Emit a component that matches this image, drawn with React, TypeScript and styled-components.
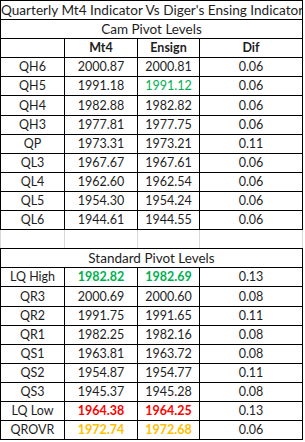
import styled, { createGlobalStyle } from "styled-components";

const GlobalStyle = createGlobalStyle`
  html, body {
    margin: 0;
    padding: 0;
    background: #ffffff;
  }
`;

type Tone = "plain" | "green" | "red" | "gold";

const toneColors: Record<Tone, string> = {
  plain: "#1e1e1e",
  green: "#00b050",
  red: "#ff0000",
  gold: "#ffc000",
};

const Sheet = styled.table`
  border-collapse: collapse;
  table-layout: fixed;
  width: 302px;
  font-family: Lato, "Liberation Sans", sans-serif;
  font-size: 12.5px;
  color: #1e1e1e;
`;

const Row = styled.tr`
  height: 19.1px;
`;

const Cell = styled.td<{ $tone?: Tone; $bold?: boolean }>`
  border: 1px solid #000;
  padding: 0 0 1px;
  text-align: center;
  vertical-align: bottom;
  line-height: 16px;
  white-space: nowrap;
  overflow: hidden;
  font-weight: ${({ $bold }) => ($bold ? 700 : 400)};
  color: ${({ $tone = "plain" }) => toneColors[$tone]};
`;

const BannerCell = styled(Cell)<{ $size: number }>`
  font-size: ${({ $size }) => $size}px;
`;

const GapCell = styled.td`
  border-top: 1px solid #000;
  border-bottom: 1px solid #000;
  border-left: 1px solid #d4d8df;
  border-right: 1px solid #d4d8df;
  padding: 0;
`;

type Level = {
  name: string;
  mt4: string;
  ensign: string;
  dif: string;
  tone?: Tone;
  bold?: boolean;
  ensignOnly?: boolean;
};

const camLevels: Level[] = [
  { name: "QH6", mt4: "2000.87", ensign: "2000.81", dif: "0.06" },
  { name: "QH5", mt4: "1991.18", ensign: "1991.12", dif: "0.06", tone: "green", ensignOnly: true },
  { name: "QH4", mt4: "1982.88", ensign: "1982.82", dif: "0.06" },
  { name: "QH3", mt4: "1977.81", ensign: "1977.75", dif: "0.06" },
  { name: "QP", mt4: "1973.31", ensign: "1973.21", dif: "0.11" },
  { name: "QL3", mt4: "1967.67", ensign: "1967.61", dif: "0.06" },
  { name: "QL4", mt4: "1962.60", ensign: "1962.54", dif: "0.06" },
  { name: "QL5", mt4: "1954.30", ensign: "1954.24", dif: "0.06" },
  { name: "QL6", mt4: "1944.61", ensign: "1944.55", dif: "0.06" },
];

const standardLevels: Level[] = [
  { name: "LQ High", mt4: "1982.82", ensign: "1982.69", dif: "0.13", tone: "green", bold: true },
  { name: "QR3", mt4: "2000.69", ensign: "2000.60", dif: "0.08" },
  { name: "QR2", mt4: "1991.75", ensign: "1991.65", dif: "0.11" },
  { name: "QR1", mt4: "1982.25", ensign: "1982.16", dif: "0.08" },
  { name: "QS1", mt4: "1963.81", ensign: "1963.72", dif: "0.08" },
  { name: "QS2", mt4: "1954.87", ensign: "1954.77", dif: "0.11" },
  { name: "QS3", mt4: "1945.37", ensign: "1945.28", dif: "0.08" },
  { name: "LQ Low", mt4: "1964.38", ensign: "1964.25", dif: "0.13", tone: "red", bold: true },
  { name: "QROVR", mt4: "1972.74", ensign: "1972.68", dif: "0.06", tone: "gold", bold: true },
];

const LevelRow = ({ level }: { level: Level }) => (
  <Row>
    <Cell>{level.name}</Cell>
    <Cell $tone={level.ensignOnly ? "plain" : level.tone} $bold={level.bold}>
      {level.mt4}
    </Cell>
    <Cell $tone={level.tone} $bold={level.bold}>
      {level.ensign}
    </Cell>
    <Cell>{level.dif}</Cell>
  </Row>
);

const App = () => (
  <>
    <GlobalStyle />
    <Sheet>
      <colgroup>
        <col style={{ width: 64 }} />
        <col style={{ width: 73 }} />
        <col style={{ width: 62 }} />
        <col style={{ width: 103 }} />
      </colgroup>
      <tbody>
        <Row>
          <BannerCell colSpan={4} $size={13.6}>
            Quarterly Mt4 Indicator Vs Diger's Ensing Indicator
          </BannerCell>
        </Row>
        <Row>
          <BannerCell colSpan={4} $size={13.5}>
            Cam Pivot Levels
          </BannerCell>
        </Row>
        <Row>
          <Cell />
          <Cell $bold>Mt4</Cell>
          <Cell $bold>Ensign</Cell>
          <Cell $bold>Dif</Cell>
        </Row>
        {camLevels.map((level) => (
          <LevelRow key={level.name} level={level} />
        ))}
        <Row>
          <GapCell />
          <GapCell />
          <GapCell />
          <GapCell />
        </Row>
        <Row>
          <BannerCell colSpan={4} $size={13.5}>
            Standard Pivot Levels
          </BannerCell>
        </Row>
        {standardLevels.map((level) => (
          <LevelRow key={level.name} level={level} />
        ))}
      </tbody>
    </Sheet>
  </>
);

export default App;
